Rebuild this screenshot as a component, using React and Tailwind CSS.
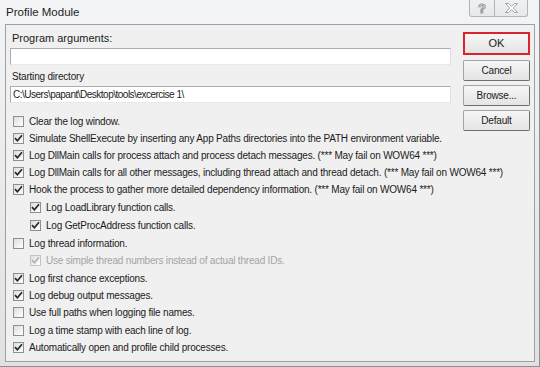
import React from "react";

const font = { fontFamily: '"Liberation Sans", Arial, sans-serif' };

function Check({ checked, disabled }) {
  return (
    <div
      className={`w-[11px] h-[11px] shrink-0 border ${
        disabled ? "border-[#c4c4c4]" : "border-[#8e8f8f]"
      } bg-gradient-to-br from-[#dedede] to-[#ffffff] flex items-center justify-center`}
    >
      {checked && (
        <svg width="9" height="9" viewBox="0 0 9 9">
          <path
            d="M1 4.2 L3.4 6.8 L8 1.2"
            fill="none"
            stroke={disabled ? "#b0b0b0" : "#262626"}
            strokeWidth="1.7"
          />
        </svg>
      )}
    </div>
  );
}

function Row({ checked, disabled, indent, h, children }) {
  return (
    <div className={`flex items-center whitespace-nowrap ${h} ${indent ? "pl-[20px]" : "pl-[3px]"}`}>
      <Check checked={checked} disabled={disabled} />
      <span
        className={`ml-[5px] text-[10px] tracking-[-0.2px] leading-[13px] ${
          disabled ? "text-[#a3a3a3]" : "text-[#1b1b1b]"
        }`}
      >
        {children}
      </span>
    </div>
  );
}

function Btn({ children, className = "" }) {
  return (
    <div
      className={`flex items-center justify-center border border-[#a4a4a4] border-r-[#6f6f6f] border-b-[#6f6f6f] rounded-[2px] bg-gradient-to-b from-[#f6f6f6] to-[#e4e4e4] text-[10px] tracking-[-0.2px] text-[#1b1b1b] ${className}`}
    >
      {children}
    </div>
  );
}

export default function App() {
  return (
    <div
      style={font}
      className="w-[540px] h-[367px] flex flex-col bg-gradient-to-b from-[#f3f4f5] to-[#dfe1e3] border-r border-b border-[#8f8f8f] overflow-hidden"
    >
      {/* title bar */}
      <div className="h-[24px] shrink-0 flex items-start">
        <div className="ml-[6px] mt-[4px] text-[11.5px] leading-[16px] text-[#1e1e1e]">Profile Module</div>
        <div className="ml-auto mr-[11px] flex">
          <div className="w-[26px] h-[17px] border border-t-0 border-[#b1b5ba] rounded-bl-[3px] bg-gradient-to-b from-[#f0f1f2] to-[#e6e8ea] flex items-center justify-center">
            <span className="text-[13px] font-bold leading-[13px] text-white [-webkit-text-stroke:1px_#9a9a9a]">?</span>
          </div>
          <div className="w-[33px] h-[17px] border border-l-0 border-t-0 border-[#b1b5ba] rounded-br-[3px] bg-gradient-to-b from-[#f0f1f2] to-[#e6e8ea] flex items-center justify-center">
            <svg width="13" height="10" viewBox="0 0 13 10">
              <polygon
                points="0.5,0.5 3.5,0.5 6.5,3.3 9.5,0.5 12.5,0.5 8.3,5 12.5,9.5 9.5,9.5 6.5,6.7 3.5,9.5 0.5,9.5 4.7,5"
                fill="#ffffff"
                stroke="#a0a0a0"
                strokeWidth="1"
              />
            </svg>
          </div>
        </div>
      </div>

      {/* client area */}
      <div className="ml-[5px] w-[530px] h-[338px] border border-[#9da1a6] bg-[#f0f0f0] flex">
        {/* left column */}
        <div className="ml-[4px] w-[441px] flex flex-col">
          <div className="mt-[7px] h-[12px] leading-[12px] text-[11px] text-[#1b1b1b] pl-[2px]">
            Program arguments:
          </div>
          <div className="mt-[4px] h-[17px] bg-white border border-[#abadb3] border-r-[#dbdfe6] border-b-[#e3e9ef]" />
          <div className="mt-[6px] h-[12px] leading-[12px] text-[10px] tracking-[-0.2px] text-[#1b1b1b] pl-[2px]">
            Starting directory
          </div>
          <div className="mt-[3px] h-[17px] bg-white border border-[#abadb3] border-r-[#dbdfe6] border-b-[#e3e9ef] flex items-center pl-[2px] text-[10px] tracking-[-0.5px] text-[#1b1b1b] whitespace-nowrap">
            C:\Users\papant\Desktop\tools\excercise 1\
          </div>

          <div className="mt-[10px] flex flex-col">
            <Row h="h-[17px]">Clear the log window.</Row>
            <Row h="h-[17px]" checked>
              Simulate ShellExecute by inserting any App Paths directories into the PATH environment variable.
            </Row>
            <Row h="h-[17px]" checked>
              Log DllMain calls for process attach and process detach messages. (*** May fail on WOW64 ***)
            </Row>
            <Row h="h-[17px]" checked>
              Log DllMain calls for all other messages, including thread attach and thread detach. (*** May fail on WOW64 ***)
            </Row>
            <Row h="h-[17px]" checked>
              Hook the process to gather more detailed dependency information. (*** May fail on WOW64 ***)
            </Row>
            <Row h="h-[18px]" checked indent>
              Log LoadLibrary function calls.
            </Row>
            <Row h="h-[18px]" checked indent>
              Log GetProcAddress function calls.
            </Row>
            <Row h="h-[18px]">Log thread information.</Row>
            <Row h="h-[17.4px]" checked disabled indent>
              Use simple thread numbers instead of actual thread IDs.
            </Row>
            <Row h="h-[17.4px]" checked>
              Log first chance exceptions.
            </Row>
            <Row h="h-[17.4px]" checked>
              Log debug output messages.
            </Row>
            <Row h="h-[17.4px]">Use full paths when logging file names.</Row>
            <Row h="h-[17.4px]">Log a time stamp with each line of log.</Row>
            <Row h="h-[17.4px]" checked>
              Automatically open and profile child processes.
            </Row>
          </div>
        </div>

        {/* right column */}
        <div className="ml-auto mr-[4px] w-[67px] flex flex-col">
          <div className="mt-[7px] h-[23px] border-2 border-[#d8242a] flex">
            <div className="flex-1 flex items-center justify-center bg-gradient-to-b from-[#f6f6f6] to-[#e4e4e4] text-[11px] text-[#1b1b1b]">
              OK
            </div>
          </div>
          <Btn className="mt-[5px] h-[21px]">Cancel</Btn>
          <Btn className="mt-[4px] h-[21px]">Browse...</Btn>
          <Btn className="mt-[4px] h-[21px]">Default</Btn>
        </div>
      </div>
    </div>
  );
}
